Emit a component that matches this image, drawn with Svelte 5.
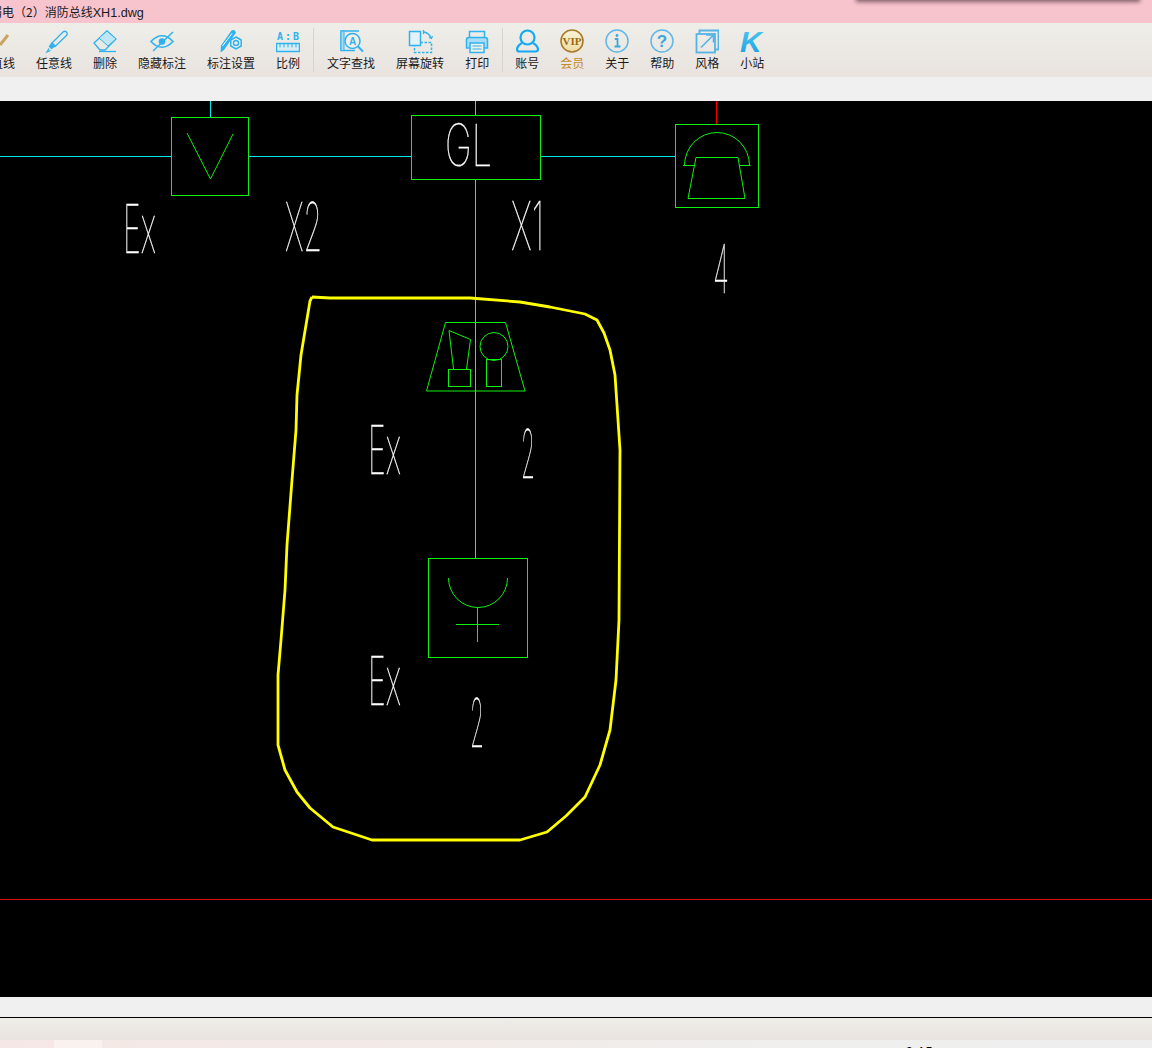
<script>
  const blue = '#2fb2ee';
  const curve = '312,297 310,301 306,325 301,355 297,395 296,430 292,480 287,545 285,590 281,640 278,675 278,745 285,770 297,792 310,808 333,827 372,840 520,840 547,832 566,816 585,797 600,765 610,730 616,680 619,620 620,450 615,375 610,350 604,333 597,320 585,314 550,307 520,302 470,298 330,298 312,297';

  // cad labels: x, baseline, text, width on screen, font size
  const labels = [
    { x: 123, y: 253, t: 'Ex', w: 33, size: 67 },
    { x: 285, y: 251, t: 'X2', w: 37, size: 67 },
    { x: 445, y: 166, t: 'GL', w: 47, size: 58 },
    { x: 511, y: 250, t: 'X1', w: 33, size: 67 },
    { x: 713, y: 293, t: '4', w: 16, size: 67 },
    { x: 368, y: 474, t: 'Ex', w: 33, size: 67 },
    { x: 521, y: 478, t: '2', w: 14, size: 67 },
    { x: 368, y: 705, t: 'Ex', w: 33, size: 67 },
    { x: 470, y: 747, t: '2', w: 14, size: 67 }
  ];
</script>

<div class="page">
  <div class="shadow"></div>
  <div class="title"><span>弱电（2）消防总线</span><span class="latin">XH1.dwg</span></div>

  <div class="toolbar">
    <div class="item">
      <svg width="24" height="28" viewBox="0 0 24 28"><path d="M9 17 17 7" stroke="#c9a55c" stroke-width="3" fill="none"/></svg>
      <span>直线</span>
    </div>
    <div class="item">
      <svg width="36" height="28" viewBox="0 0 36 28" fill="none" stroke={blue} stroke-width="1.300">
        <path d="M16 15 27 4q2-1.500 3.500 0t0 3.500L19 18.500z"/><path d="M16 15l-2.500 3.500 2 2 3.500-2.500z" fill={blue}/><path d="M13 20.500l-2 3.500 3.500-1.500"/>
      </svg>
      <span>任意线</span>
    </div>
    <div class="item">
      <svg width="24" height="28" viewBox="0 0 24 28" fill="none" stroke={blue} stroke-width="1.300">
        <path d="M1 15 14 3l9 8-11 11H7z"/><path d="M14 3l9 8-8 7-9-8z" fill="#bfe5f7" stroke-width="1"/><path d="M6 23.500h17"/>
      </svg>
      <span>删除</span>
    </div>
    <div class="item">
      <svg width="48" height="28" viewBox="0 0 48 28" fill="none" stroke={blue} stroke-width="1.600">
        <path d="M13 13.500q11-11.500 22 0-11 11.500-22 0z"/><circle cx="24" cy="13.500" r="3.300" fill={blue} stroke="none"/><path d="M15 23 35 4" stroke-width="1.400"/>
      </svg>
      <span>隐藏标注</span>
    </div>
    <div class="item">
      <svg width="48" height="28" viewBox="0 0 48 28" fill="none" stroke={blue} stroke-width="1.500">
        <path d="M13.500 24.500l.5-7 10.500-15q3-1.500 4.500 2l-1 1.500-11 16z" fill={blue} stroke="none"/><path d="M15.500 18 25 5.500" stroke="#fff" stroke-width="1"/>
        <path d="M29 9l5.200 3v6l-5.200 3-5.200-3v-6z" fill="#f0efe9"/><circle cx="29" cy="15" r="2.500"/>
      </svg>
      <span>标注设置</span>
    </div>
    <div class="item">
      <svg width="24" height="28" viewBox="0 0 24 28" fill="none" stroke={blue}>
        <text x="13" y="12" class="ab" fill={blue} stroke="none" text-anchor="middle">A:B</text>
        <path d="M.5 15.500h23v8H.5z" fill="#d8edf7" stroke-width="1.500"/><path d="M4 15.500v4M8 15.500v4M12 15.500v4M16 15.500v4M20 15.500v4" stroke-width="1"/>
      </svg>
      <span>比例</span>
    </div>
    <div class="sep"></div>
    <div class="item">
      <svg width="48" height="28" viewBox="0 0 48 28" fill="none" stroke={blue} stroke-width="1.500">
        <path d="M32 3H14v19.500h14"/><path d="M14 3h3v19.500h-3z" fill="#a9dcf5" stroke-width="1"/>
        <circle cx="25.500" cy="13" r="7.500" fill="#f0efe9"/><path d="M31 18.500l5 5" stroke-width="2"/>
        <text x="25.500" y="17" class="glyph" fill={blue} stroke="none" text-anchor="middle">A</text>
      </svg>
      <span>文字查找</span>
    </div>
    <div class="item">
      <svg width="48" height="28" viewBox="0 0 48 28" fill="none" stroke={blue} stroke-width="1.500">
        <rect x="13.500" y="3.500" width="11" height="14" fill="#e3f1f8"/>
        <path d="M24.500 14.500H35.500V24.500H18.500V18" stroke-dasharray="2.500 1.500"/>
        <path d="M28 4q5 1 7 6"/><path d="M27.500 2v4M33 9.500l2.500 1 1-2.500" stroke-width="1.200"/>
      </svg>
      <span>屏幕旋转</span>
    </div>
    <div class="item">
      <svg width="24" height="28" viewBox="0 0 24 28" fill="none" stroke={blue} stroke-width="1.500">
        <path d="M4.500 10V3.500h15V10"/><path d="M5 20H1.500v-8q0-2.500 2.500-2.500h16q2.500 0 2.500 2.500v8H19" fill="#a9dcf5"/>
        <rect x="5" y="15" width="14" height="9.500" fill="#f0efe9"/><path d="M7.500 18h9M7.500 21h9" stroke-width="1"/>
      </svg>
      <span>打印</span>
    </div>
    <div class="sep tight"></div>
    <div class="item">
      <svg width="24" height="28" viewBox="0 0 24 28" fill="none" stroke="#14a9f5" stroke-width="2.200">
        <circle cx="12.500" cy="9.500" r="7"/><path d="M7 15Q2 18 2 21.500 2 23.500 4.500 23.500H20.500Q23 23.500 23 21.500 23 18 18 15"/>
      </svg>
      <span>账号</span>
    </div>
    <div class="item vip">
      <svg width="24" height="28" viewBox="0 0 24 28" fill="none">
        <defs><linearGradient id="vipfill" x1="0" y1="0" x2="0" y2="1"><stop offset="0" stop-color="#fbf3d6"/><stop offset="1" stop-color="#f0dda6"/></linearGradient></defs>
        <circle cx="12" cy="13" r="11" stroke="#a97a2c" stroke-width="1.600" fill="url(#vipfill)"/>
        <text x="12" y="17" class="viptext" fill="#9a6a12" text-anchor="middle">VIP</text>
      </svg>
      <span>会员</span>
    </div>
    <div class="item">
      <svg width="24" height="28" viewBox="0 0 24 28" fill="none" stroke="#62b7e6" stroke-width="1.500">
        <circle cx="12" cy="13" r="11"/><circle cx="12" cy="7.500" r="1.400" fill="#3ba7e0" stroke="none"/><path d="M9.800 11H12.500v7.500M9.500 18.500h6" stroke="#3ba7e0" stroke-width="1.800"/>
      </svg>
      <span>关于</span>
    </div>
    <div class="item">
      <svg width="24" height="28" viewBox="0 0 24 28" fill="none" stroke="#62b7e6" stroke-width="1.500">
        <circle cx="12" cy="13" r="11"/><text x="12" y="19" class="help" fill="#3ba7e0" stroke="none" text-anchor="middle">?</text>
      </svg>
      <span>帮助</span>
    </div>
    <div class="item">
      <svg width="24" height="28" viewBox="0 0 24 28" fill="none" stroke="#55b4e6" stroke-width="1.800">
        <path d="M4.500 6V2.500h19v19H20"/><rect x="1.500" y="6" width="18.500" height="18.500"/><path d="M6 19.500 18 7.500M11 7h7.500v7.500" stroke-width="1.600"/>
      </svg>
      <span>风格</span>
    </div>
    <div class="item">
      <svg width="24" height="28" viewBox="0 0 24 28">
        <defs><linearGradient id="kfill" x1="0" y1="0" x2="0" y2="1"><stop offset="0" stop-color="#55caf2"/><stop offset="1" stop-color="#169fe2"/></linearGradient></defs>
        <text x="0" y="24" class="klogo" fill="url(#kfill)">K</text>
      </svg>
      <span>小站</span>
    </div>
  </div>

  <div class="gap"></div>

  <svg class="canvas" width="1152" height="896" viewBox="0 101 1152 896" fill="none">
    <g stroke="#00e8e8" shape-rendering="crispEdges">
      <path d="M0 156.500H171M249 156.500H411M541 156.500H675"/>
      <path d="M210.500 101V117M475.500 101V115M475.500 180V558"/>
    </g>
    <path d="M716.500 101V124" stroke="#f00000" shape-rendering="crispEdges"/>

    <g stroke="#10f010">
      <g shape-rendering="crispEdges">
        <rect x="171.500" y="117.500" width="77" height="78"/>
        <rect x="411.500" y="115.500" width="129" height="64"/>
        <rect x="675.500" y="124.500" width="83" height="83"/>
        <rect x="428.500" y="558.500" width="99" height="99"/>
        <rect x="448.500" y="369.500" width="22" height="17"/>
        <rect x="486.500" y="359.500" width="15" height="27"/>
        <path d="M477.500 607V642M456 624.500H499"/>
      </g>
      <path d="M187 133 210.500 179 233 134"/>
      <path d="M683 165.500H695M739 165.500H750.500M684.500 165.500A32.500 33 0 0 1 749.500 165.500"/>
      <path d="M688 198.500 696 157.500H738L745 198.500Z"/>
      <path d="M445.500 322.500H505.500L525 391H426.500Z"/>
      <path d="M449 330.500 470.500 339.500 466.500 369M453.500 369 449 330.500"/>
      <circle cx="494" cy="346.500" r="14"/>
      <path d="M448.500 578A29.500 29.500 0 0 0 507.500 578"/>
    </g>

    <g class="labels">
      {#each labels as l}
        <text x={l.x} y={l.y} class="cad" font-size={l.size} textLength={l.w} lengthAdjust="spacingAndGlyphs">{l.t}</text>
      {/each}
    </g>

    <polyline points={curve} stroke="#ffff00" stroke-width="2.800" stroke-linejoin="round"/>
    <path d="M0 899.500H1152" stroke="#d81010" shape-rendering="crispEdges"/>
  </svg>

  <div class="gap small"></div>
  <div class="status"></div>
  <div class="strip">
    <div class="tab"></div>
    <div class="clock">9:15</div>
  </div>
</div>

<style>
  :global(body) {
    background: #f0f0f0;
  }

  .page {
    position: relative;
    width: 1152px;
    height: 1048px;
    overflow: hidden;
    font-family: "Noto Sans CJK SC", "Liberation Sans", sans-serif;
    color: #1a1a1a;
  }

  .shadow {
    position: absolute;
    top: -12px;
    left: 857px;
    width: 282px;
    height: 12px;
    background: #8d7278;
    box-shadow: 0 1px 4px 1px rgba(90, 60, 70, 0.75);
  }

  .title {
    height: 23px;
    line-height: 24px;
    background: #f7c3cd;
    font-size: 12px;
    margin-left: -10px;
    white-space: nowrap;
  }

  .latin {
    font-family: "Liberation Sans", sans-serif;
    font-size: 12.600px;
  }

  .toolbar {
    height: 54px;
    display: flex;
    align-items: flex-start;
    gap: 1px;
    margin-left: -19px;
    background: linear-gradient(#eeeee9, #e9e3df);
  }

  .item {
    display: flex;
    flex-direction: column;
    align-items: center;
    padding: 5px 10px 0;
    font-size: 12px;
    line-height: 16px;
    white-space: nowrap;
    flex: none;
  }

  .item svg {
    display: block;
    margin-bottom: -1px;
  }

  .vip {
    color: #c28b26;
  }

  .sep {
    width: 1px;
    height: 44px;
    margin: 5px 2px 0 2px;
    background: #d6d4d0;
    flex: none;
  }

  .sep.tight {
    margin-right: 1px;
  }

  .ab {
    font: bold 10px "DejaVu Sans Mono", monospace;
    letter-spacing: 2px;
  }

  .glyph {
    font: bold 10px "Liberation Sans", sans-serif;
  }

  .viptext {
    font: bold 11px "Liberation Serif", serif;
  }

  .help {
    font: bold 17px "Liberation Sans", sans-serif;
  }

  .klogo {
    font: italic bold 30px "Liberation Sans", sans-serif;
  }

  .gap {
    height: 24px;
    background: #f0f0f0;
  }

  .gap.small {
    height: 20px;
  }

  .canvas {
    display: block;
    background: #000;
  }

  .labels {
    filter: grayscale(1);
  }

  .cad {
    font-family: Inter, "Liberation Sans", sans-serif;
    font-weight: 100;
    fill: #fff;
    stroke: #fff;
    stroke-width: 0.3;
  }

  .status {
    height: 22px;
    border-top: 1px solid #000;
    background: linear-gradient(#eeeee9, #e9e3df);
  }

  .strip {
    height: 8px;
    display: flex;
    overflow: hidden;
    background: linear-gradient(90deg, #f5e7e5, #f2ebe8 40%, #efefee 70%, #eeeeee);
  }

  .tab {
    width: 48px;
    height: 8px;
    margin-left: 54px;
    background: #f9f2ef;
    flex: none;
  }

  .clock {
    margin-left: 804px;
    padding-top: 5px;
    font: 12px/14px "Liberation Sans", sans-serif;
    color: #000;
    letter-spacing: 1px;
  }
</style>
